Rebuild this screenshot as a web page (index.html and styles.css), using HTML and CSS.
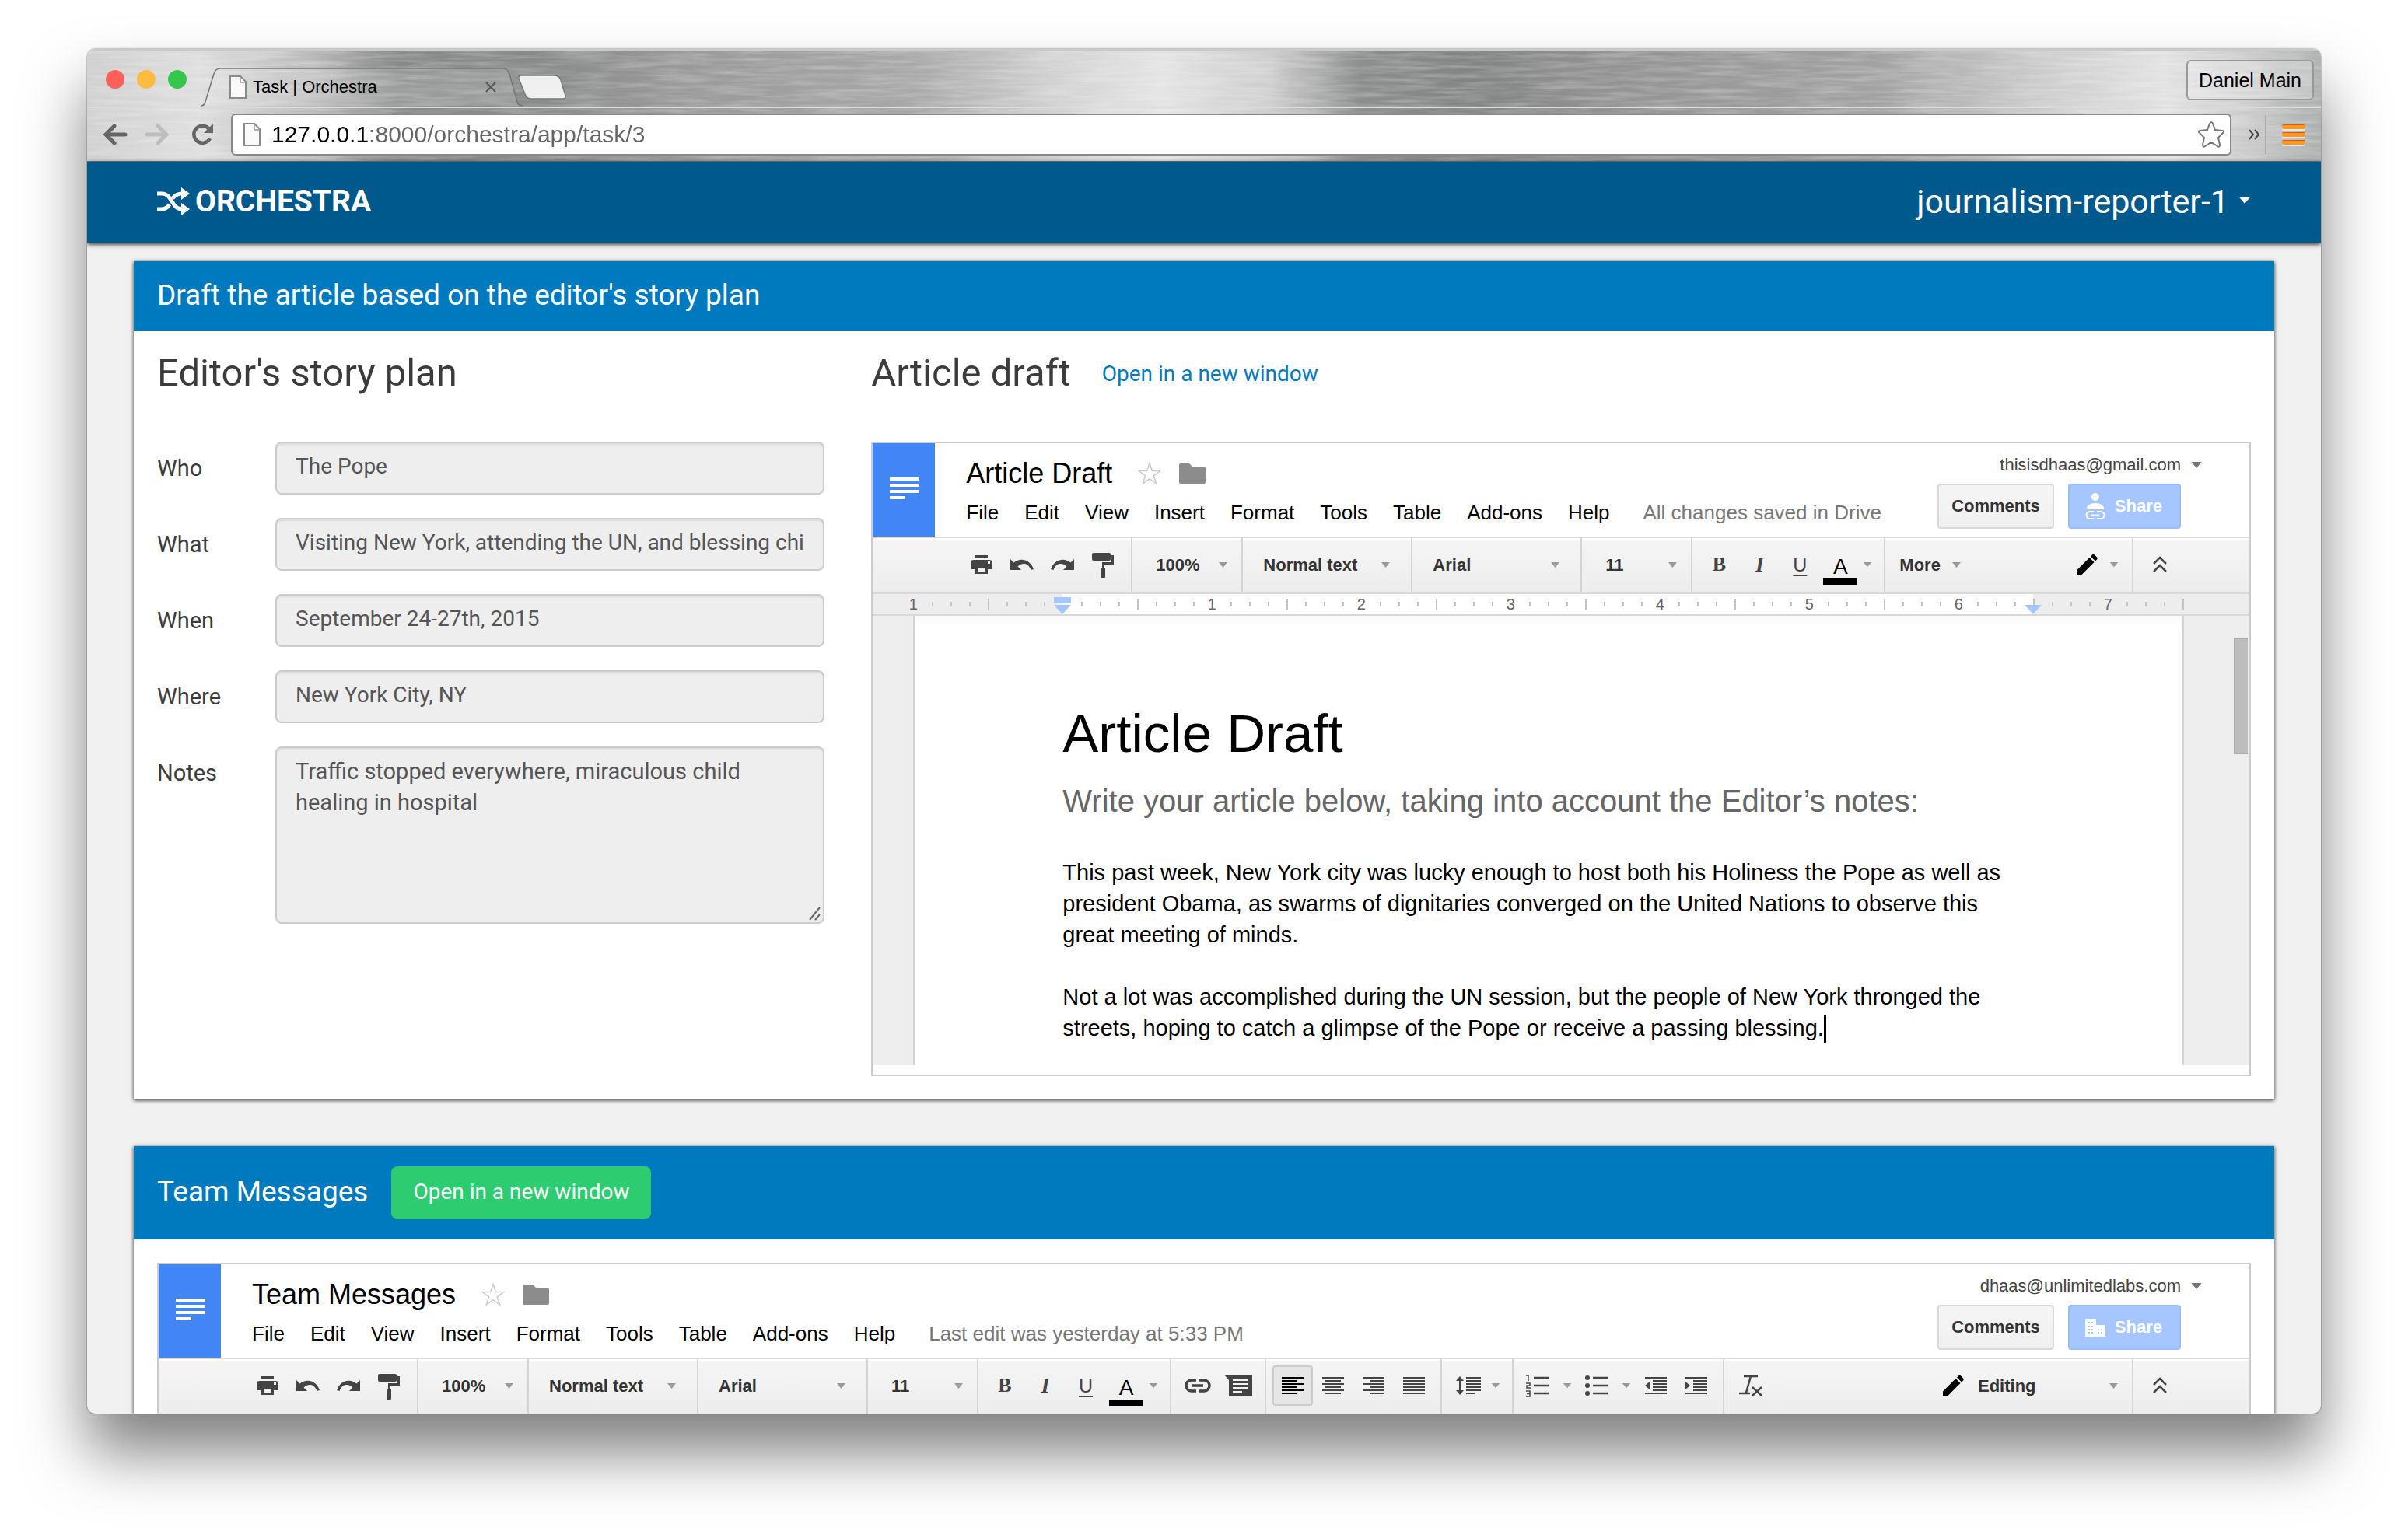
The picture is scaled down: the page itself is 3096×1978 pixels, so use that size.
FILE: index.html
```html
<!DOCTYPE html>
<html lang="en">
<head>
<meta charset="utf-8">
<title>Task | Orchestra</title>
<link rel="stylesheet" href="styles.css">
</head>
<body>
<svg class="sprite" aria-hidden="true">
  <symbol id="file" viewBox="0 0 22 30"><path d="M1 1h13l7 7v21H1z" fill="#fafafa" stroke="#8a8a8a" stroke-width="2"/><path d="M14 1v8h7" fill="none" stroke="#999" stroke-width="1.5"/></symbol>
  <symbol id="star" viewBox="0 0 30 30"><path d="M15 1.500l3.300 10h10.500l-8.500 6.300 3.300 10.200-8.600-6.300-8.600 6.300 3.300-10.200-8.500-6.300h10.500z" fill="#fff" stroke="#ccc" stroke-width="1.500"/></symbol>
  <symbol id="folder" viewBox="0 0 34 26"><path d="M2 0h11l4 4h15a2 2 0 0 1 2 2v18a2 2 0 0 1-2 2H2a2 2 0 0 1-2-2V2a2 2 0 0 1 2-2z" fill="#8c8c8c"/></symbol>
  <symbol id="print" viewBox="0 0 32 32"><path d="M8 4h16v4H8zM6 10h20a4 4 0 0 1 4 4v8h-6v-4H8v4H2v-8a4 4 0 0 1 4-4zM8 18h16v10H8zm3 2v6h10v-6zM24 12v3h3v-3z" fill="#444" fill-rule="evenodd"/></symbol>
  <symbol id="undo" viewBox="0 0 32 32"><path d="M1 9l4.500 4.500C13 7 26 8 31 22l-3.500 1C24 14 17 13 10.500 18.500L15 23H1z" fill="#444"/></symbol>
  <symbol id="redo" viewBox="0 0 32 32"><path d="M31 9l-4.500 4.500C19 7 6 8 1 22l3.500 1C8 14 15 13 21.500 18.500L17 23h14z" fill="#444"/></symbol>
  <symbol id="paint" viewBox="0 0 32 36"><path d="M4 3h20a2 2 0 0 1 2 2v1h4v12H18v4h1v12a2 2 0 0 1-6 0V22h2v-7h12V8h-1v3a2 2 0 0 1-2 2H4a2 2 0 0 1-2-2V5a2 2 0 0 1 2-2z" fill="#444"/></symbol>
  <symbol id="pencil" viewBox="0 0 32 32"><path d="M3 23.500L19.500 7l6 6L9 29.500H3zM21 5.500l2-2q1.500-1.500 3 0l3 3q1.500 1.500 0 3l-2 2z" fill="#000"/></symbol>
  <symbol id="collapse" viewBox="0 0 32 32"><path d="M8 15l8-8 8 8M8 25l8-8 8 8" fill="none" stroke="#444" stroke-width="2.500"/></symbol>
  <symbol id="caret" viewBox="0 0 12 8"><path d="M0 0h12L6 7z" fill="currentColor"/></symbol>
  <symbol id="link" viewBox="0 0 36 32"><path d="M16 9h-6a7 7 0 0 0 0 14h6M20 9h6a7 7 0 0 1 0 14h-6M11 16h14" fill="none" stroke="#444" stroke-width="3.500"/></symbol>
  <symbol id="comment" viewBox="0 0 36 32"><path d="M0 2h36v28H6V9zM11 8v2h19V8zm0 5v2h19v-2zm0 5v2h19v-2zm0 5v2h12v-2z" fill="#444" fill-rule="evenodd"/></symbol>
  <symbol id="al-left" viewBox="0 0 28 24"><path d="M0 2h28M0 6h19M0 10h28M0 14h19M0 18h28M0 22h19" stroke="currentColor" stroke-width="2"/></symbol>
  <symbol id="al-center" viewBox="0 0 28 24"><path d="M0 2h28M4 6h20M0 10h28M4 14h20M0 18h28M4 22h20" stroke="currentColor" stroke-width="2"/></symbol>
  <symbol id="al-right" viewBox="0 0 28 24"><path d="M0 2h28M9 6h19M0 10h28M9 14h19M0 18h28M9 22h19" stroke="currentColor" stroke-width="2"/></symbol>
  <symbol id="al-just" viewBox="0 0 28 24"><path d="M0 2h28M0 6h28M0 10h28M0 14h28M0 18h28M0 22h28" stroke="currentColor" stroke-width="2"/></symbol>
  <symbol id="spacing" viewBox="0 0 34 28"><path d="M6 4v20M14 4h19M14 8h19M14 12h19M14 16h19M14 20h19M14 24h11" stroke="#444" stroke-width="2"/><path d="M1 8l5-6 5 6zM1 20l5 6 5-6z" fill="#444"/></symbol>
  <symbol id="numbers" viewBox="0 0 30 30"><path d="M10 5h19M10 15h19M10 25h19" stroke="#444" stroke-width="2.500"/><path d="M0 2h3v7M0 12h5v3H1v3h5M0 22h5v7H0M1 25.500h4" fill="none" stroke="#444" stroke-width="1.500"/></symbol>
  <symbol id="bullets" viewBox="0 0 30 30"><path d="M10 5h19M10 15h19M10 25h19" stroke="#444" stroke-width="2.500"/><circle cx="3" cy="5" r="3" fill="#444"/><circle cx="3" cy="15" r="3" fill="#444"/><circle cx="3" cy="25" r="3" fill="#444"/></symbol>
  <symbol id="outdent" viewBox="0 0 28 24"><path d="M0 2h28M10 6h18M10 10h18M10 14h18M10 18h18M0 22h28" stroke="#444" stroke-width="2"/><path d="M6 7v10L0 12z" fill="#444"/></symbol>
  <symbol id="indent" viewBox="0 0 28 24"><path d="M0 2h28M10 6h18M10 10h18M10 14h18M10 18h18M0 22h28" stroke="#444" stroke-width="2"/><path d="M0 7v10l6-5z" fill="#444"/></symbol>
  <symbol id="clear" viewBox="0 0 30 30"><path d="M6 3h18M15 3L9 24M0 25h14M17 17l12 11M29 17L17 28" fill="none" stroke="#444" stroke-width="2.500"/></symbol>
  <symbol id="ticks" viewBox="0 0 180 26"><path d="M13 10v6M37 10v6M61 10v6M85 6v14M109 10v6M133 10v6M157 10v6" stroke="#c4c4c4" stroke-width="2"/></symbol>
  <symbol id="half-ticks" viewBox="0 0 88 26"><path d="M13 10v6M37 10v6M61 10v6M85 6v14" stroke="#c4c4c4" stroke-width="2"/></symbol>
</svg>

<div class="window">
  <header class="chrome">
    <svg class="metal" aria-hidden="true">
      <defs>
        <linearGradient id="steel">
          <stop offset="0" stop-color="#d0d0d0"/><stop offset=".05" stop-color="#dedede"/><stop offset=".1" stop-color="#bababa"/>
          <stop offset=".14" stop-color="#878988"/><stop offset=".2" stop-color="#898b8a"/><stop offset=".27" stop-color="#9a9a9a"/>
          <stop offset=".37" stop-color="#a8a8a8"/><stop offset=".43" stop-color="#d0d0d0"/><stop offset=".48" stop-color="#e4e4e4"/>
          <stop offset=".53" stop-color="#cdcdcd"/><stop offset=".57" stop-color="#8d8f8e"/><stop offset=".62" stop-color="#828483"/>
          <stop offset=".68" stop-color="#939393"/><stop offset=".8" stop-color="#a2a2a2"/><stop offset=".87" stop-color="#cacaca"/>
          <stop offset=".93" stop-color="#e2e2e2"/><stop offset=".97" stop-color="#c8c8c8"/><stop offset="1" stop-color="#abafad"/>
        </linearGradient>
        <filter id="brushed" x="0" y="0" width="100%" height="100%">
          <feTurbulence type="fractalNoise" baseFrequency="0.015 0.2" numOctaves="3" seed="4"/>
          <feColorMatrix values="0 0 0 0 1  0 0 0 0 1  0 0 0 0 1  .500 0 0 0 -.18"/>
        </filter>
      </defs>
      <rect width="100%" height="100%" fill="url(#steel)"/>
      <rect width="100%" height="100%" filter="url(#brushed)"/>
    </svg>
    <div class="tabstrip">
      <div class="lights">
        <button class="light close" aria-label="Close"></button>
        <button class="light minimise" aria-label="Minimise"></button>
        <button class="light zoom" aria-label="Zoom"></button>
      </div>
      <div class="tab">
        <svg class="tab-shape" viewBox="0 0 414 50" aria-hidden="true"><path d="M0 49q5 0 6-5L17 8q2-7 8-7h363q7 0 9 7l10 36q1 5 7 5" fill="#fff" fill-opacity=".15" stroke="#777" stroke-width="1.500"/></svg>
        <svg class="file"><use href="#file"/></svg>
        <span class="tab-title">Task | Orchestra</span>
        <button class="tab-close" aria-label="Close tab"><svg width="14" height="14" viewBox="0 0 14 14"><path d="M1 1l12 12M13 1L1 13" stroke="#555" stroke-width="2"/></svg></button>
      </div>
      <button class="newtab" aria-label="New tab"><svg width="64" height="32" viewBox="0 0 64 32"><path d="M5 1h42q7 0 9 6l6 20q1 4-3 4H18q-6 0-8-6L2 5q-1-4 3-4z" fill="#f0f0f0" stroke="#777" stroke-width="1.500"/></svg></button>
      <button class="profile">Daniel Main</button>
    </div>
    <div class="addressbar">
      <button class="nav-btn" aria-label="Back"><svg width="32" height="28" viewBox="0 0 32 28"><path d="M15 3L4 14l11 11M5 14h24" fill="none" stroke="#666" stroke-width="5" stroke-linecap="round"/></svg></button>
      <button class="nav-btn" aria-label="Forward"><svg width="32" height="28" viewBox="0 0 32 28"><path d="M17 3l11 11-11 11M27 14H3" fill="none" stroke="#bdbdbd" stroke-width="5" stroke-linecap="round"/></svg></button>
      <button class="nav-btn reload" aria-label="Reload"><svg width="30" height="28" viewBox="0 0 30 28"><path d="M24 19a11 11 0 1 1-1-12" fill="none" stroke="#666" stroke-width="4.500"/><path d="M28 0v12H16z" fill="#666"/></svg></button>
      <div class="omnibox">
        <svg class="file"><use href="#file"/></svg>
        <input class="url" type="text" aria-label="Address" value="127.0.0.1:8000/orchestra/app/task/3">
        <button class="bookmark" aria-label="Bookmark"><svg width="36" height="36" viewBox="0 0 36 36"><path d="M16 4q2-4 4 0l3 8 9 1q4 0 1 3l-6 6 2 9q0 4-3 2l-8-5-8 5q-3 2-3-2l2-9-6-6q-3-3 1-3l9-1z" fill="#fff" stroke="#777" stroke-width="2"/></svg></button>
      </div>
      <button class="overflow" aria-label="More extensions"><svg width="14" height="14" viewBox="0 0 14 14"><path d="M1 1l5 6-5 6M8 1l5 6-5 6" fill="none" stroke="#444" stroke-width="2"/></svg></button>
      <button class="menu" aria-label="Menu"><span></span><span></span><span></span></button>
    </div>
  </header>

  <nav class="navbar">
    <a class="brand" href="#"><svg width="42" height="36" viewBox="0 0 42 36"><path d="M0 8h6c14 0 12 20 26 20h2M0 28h6c5 0 8-3 10-6M20 14c3-4 6-6 12-6h2" fill="none" stroke="#fff" stroke-width="5"/><path d="M31 0l11 8-11 8zM31 20l11 8-11 8z" fill="#fff"/></svg>ORCHESTRA</a>
    <a class="user" href="#">journalism-reporter-1<svg width="16" height="9"><use href="#caret"/></svg></a>
  </nav>

  <main class="content">
    <section class="card">
      <h2 class="card-head">Draft the article based on the editor's story plan</h2>
      <div class="card-body columns">
        <form class="plan">
          <h3>Editor's story plan</h3>
          <div class="field"><label for="who">Who</label><input id="who" type="text" readonly value="The Pope"></div>
          <div class="field"><label for="what">What</label><input id="what" type="text" readonly value="Visiting New York, attending the UN, and blessing children"></div>
          <div class="field"><label for="when">When</label><input id="when" type="text" readonly value="September 24-27th, 2015"></div>
          <div class="field"><label for="where">Where</label><input id="where" type="text" readonly value="New York City, NY"></div>
          <div class="field"><label for="notes">Notes</label><div class="area"><textarea id="notes" readonly>Traffic stopped everywhere, miraculous child healing in hospital</textarea><svg class="grip" width="16" height="18" viewBox="0 0 16 18"><path d="M1 17L14 1M8 17l6-7" stroke="#666" stroke-width="2"/></svg></div></div>
        </form>
        <div class="draft">
          <div class="draft-head"><h3>Article draft</h3><a href="#">Open in a new window</a></div>
          <article class="doc">
            <header class="doc-head">
              <div class="doc-logo"><span></span><span></span><span></span><span class="short"></span></div>
              <div class="doc-main">
                <div class="doc-title"><h4>Article Draft</h4><svg class="star"><use href="#star"/></svg><svg class="folder"><use href="#folder"/></svg></div>
                <div class="doc-menu"><button>File</button><button>Edit</button><button>View</button><button>Insert</button><button>Format</button><button>Tools</button><button>Table</button><button>Add-ons</button><button>Help</button><span class="status">All changes saved in Drive</span></div>
              </div>
              <div class="doc-side">
                <a class="account" href="#">thisisdhaas@gmail.com<svg width="16" height="9"><use href="#caret"/></svg></a>
                <div class="actions"><button class="btn">Comments</button><button class="btn share"><svg width="28" height="36" viewBox="0 0 28 36"><circle cx="14" cy="6" r="5" fill="#fff"/><path d="M3 22q0-8 11-8t11 8z" fill="#fff"/><path d="M12 25H7a4 4 0 0 0 0 9h5M16 25h5a4 4 0 0 1 0 9h-5M9 29.500h10" fill="#a6c6ff" stroke="#fff" stroke-width="2"/></svg>Share</button></div>
              </div>
            </header>
            <div class="toolbar">
              <div class="group first"><button class="tool" aria-label="Print"><svg class="i32"><use href="#print"/></svg></button><button class="tool" aria-label="Undo"><svg class="i32"><use href="#undo"/></svg></button><button class="tool" aria-label="Redo"><svg class="i32"><use href="#redo"/></svg></button><button class="tool" aria-label="Paint format"><svg class="i36"><use href="#paint"/></svg></button></div>
              <div class="group pick"><select class="narrow" aria-label="Zoom"><option>100%</option></select></div>
              <div class="group pick"><select class="wide" aria-label="Style"><option>Normal text</option></select></div>
              <div class="group pick"><select class="wide" aria-label="Font"><option>Arial</option></select></div>
              <div class="group pick"><select class="narrow" aria-label="Font size"><option>11</option></select></div>
              <div class="group drops"><button class="tool bold">B</button><button class="tool italic">I</button><button class="tool underline">U</button><button class="tool colour"><span>A</span></button><svg class="drop"><use href="#caret"/></svg></div>
              <div class="group pick grow"><select class="more" aria-label="More tools"><option>More</option></select></div>
              <div class="plain"><button class="tool" aria-label="Mode"><svg class="i32"><use href="#pencil"/></svg></button><svg class="drop"><use href="#caret"/></svg></div>
              <div class="group last"><button class="tool" aria-label="Hide menus"><svg class="i32"><use href="#collapse"/></svg></button></div>
            </div>
            <ol class="ruler">
              <li class="off"><span>1</span><svg class="ticks"><use href="#ticks"/></svg></li>
              <li><span class="marker"><svg width="24" height="26" viewBox="0 0 24 26"><path d="M1 4h22v8H1zM1 14h22L12 26z" fill="#a5c6ff"/></svg></span><svg class="ticks"><use href="#ticks"/></svg></li>
              <li><span>1</span><svg class="ticks"><use href="#ticks"/></svg></li>
              <li><span>2</span><svg class="ticks"><use href="#ticks"/></svg></li>
              <li><span>3</span><svg class="ticks"><use href="#ticks"/></svg></li>
              <li><span>4</span><svg class="ticks"><use href="#ticks"/></svg></li>
              <li><span>5</span><svg class="ticks"><use href="#ticks"/></svg></li>
              <li class="edge"><span>6</span><svg class="ticks"><use href="#ticks"/></svg><svg class="stop" width="24" height="26" viewBox="0 0 24 26"><path d="M1 14h22L12 26z" fill="#a5c6ff"/></svg></li>
              <li class="off half"><span>7</span><svg class="ticks"><use href="#half-ticks"/></svg></li>
            </ol>
            <div class="desk">
              <div class="page">
                <h1>Article Draft</h1>
                <p class="sub">Write your article below, taking into account the Editor’s notes:</p>
                <p>This past week, New York city was lucky enough to host both his Holiness the Pope as well as president Obama, as swarms of dignitaries converged on the United Nations to observe this great meeting of minds.</p>
                <p>Not a lot was accomplished during the UN session, but the people of New York thronged the streets, hoping to catch a glimpse of the Pope or receive a passing blessing.<span class="cursor"></span></p>
              </div>
              <div class="scroll"></div>
            </div>
          </article>
        </div>
      </div>
    </section>

    <section class="card">
      <div class="card-head tall"><h2>Team Messages</h2><button class="open">Open in a new window</button></div>
      <div class="card-body messages">
        <article class="doc cut">
          <header class="doc-head">
            <div class="doc-logo"><span></span><span></span><span></span><span class="short"></span></div>
            <div class="doc-main">
              <div class="doc-title"><h4>Team Messages</h4><svg class="star"><use href="#star"/></svg><svg class="folder"><use href="#folder"/></svg></div>
              <div class="doc-menu"><button>File</button><button>Edit</button><button>View</button><button>Insert</button><button>Format</button><button>Tools</button><button>Table</button><button>Add-ons</button><button>Help</button><span class="status">Last edit was yesterday at 5:33 PM</span></div>
            </div>
            <div class="doc-side">
              <a class="account" href="#">dhaas@unlimitedlabs.com<svg width="16" height="9"><use href="#caret"/></svg></a>
              <div class="actions"><button class="btn">Comments</button><button class="btn share"><svg width="28" height="24" viewBox="0 0 28 24"><path d="M1 1h14v8h12v15H1zM5 5v2h2V5zm4 0v2h2V5zM5 10v2h2v-2zm4 0v2h2v-2zM5 14v2h2v-2zm4 0v2h2v-2zM5 18v2h2v-2zm4 0v2h2v-2zM17 14v2h2v-2zm4 0v2h2v-2zM17 18v2h2v-2zm4 0v2h2v-2z" fill="#fff" fill-rule="evenodd"/></svg>Share</button></div>
            </div>
          </header>
          <div class="toolbar">
            <div class="group first"><button class="tool" aria-label="Print"><svg class="i32"><use href="#print"/></svg></button><button class="tool" aria-label="Undo"><svg class="i32"><use href="#undo"/></svg></button><button class="tool" aria-label="Redo"><svg class="i32"><use href="#redo"/></svg></button><button class="tool" aria-label="Paint format"><svg class="i36"><use href="#paint"/></svg></button></div>
            <div class="group pick"><select class="narrow" aria-label="Zoom"><option>100%</option></select></div>
            <div class="group pick"><select class="wide" aria-label="Style"><option>Normal text</option></select></div>
            <div class="group pick"><select class="wide" aria-label="Font"><option>Arial</option></select></div>
            <div class="group pick"><select class="narrow" aria-label="Font size"><option>11</option></select></div>
            <div class="group drops"><button class="tool bold">B</button><button class="tool italic">I</button><button class="tool underline">U</button><button class="tool colour"><span>A</span></button><svg class="drop"><use href="#caret"/></svg></div>
            <div class="group"><button class="tool" aria-label="Link"><svg class="w36"><use href="#link"/></svg></button><button class="tool" aria-label="Comment"><svg class="w36"><use href="#comment"/></svg></button></div>
            <div class="group"><button class="tool active" aria-label="Align left"><svg class="i28"><use href="#al-left"/></svg></button><button class="tool" aria-label="Align centre"><svg class="i28"><use href="#al-center"/></svg></button><button class="tool" aria-label="Align right"><svg class="i28"><use href="#al-right"/></svg></button><button class="tool" aria-label="Justify"><svg class="i28"><use href="#al-just"/></svg></button></div>
            <div class="group drops"><button class="tool" aria-label="Line spacing"><svg class="i34"><use href="#spacing"/></svg></button><svg class="drop"><use href="#caret"/></svg></div>
            <div class="group lists"><button class="tool" aria-label="Numbered list"><svg class="i30"><use href="#numbers"/></svg></button><svg class="drop"><use href="#caret"/></svg><button class="tool" aria-label="Bulleted list"><svg class="i30"><use href="#bullets"/></svg></button><svg class="drop"><use href="#caret"/></svg><button class="tool" aria-label="Decrease indent"><svg class="i28"><use href="#outdent"/></svg></button><button class="tool" aria-label="Increase indent"><svg class="i28"><use href="#indent"/></svg></button></div>
            <div class="group grow"><button class="tool" aria-label="Clear formatting"><svg class="i30"><use href="#clear"/></svg></button></div>
            <div class="mode"><button class="tool" aria-label="Mode"><svg class="i32"><use href="#pencil"/></svg></button><select aria-label="Editing mode"><option>Editing</option></select></div>
            <div class="group last"><button class="tool" aria-label="Hide menus"><svg class="i32"><use href="#collapse"/></svg></button></div>
          </div>
        </article>
      </div>
    </section>
  </main>
</div>
</body>
</html>
```

FILE: styles.css
```css
* { box-sizing: border-box; }

body {
  margin: 0;
  padding: 63px 112px 160px;
  background: #fff;
  font-family: Roboto, sans-serif;
  color: #3c3c3c;
}

h1, h2, h3, h4, p, ol { margin: 0; padding: 0; font-weight: 400; }
button, input, select, textarea { font: inherit; color: inherit; margin: 0; }
button { padding: 0; border: 0; background: none; }
a { text-decoration: none; color: #007abf; }
svg { display: block; flex: none; }
.sprite { position: absolute; width: 0; height: 0; }

.window {
  display: flex;
  flex-direction: column;
  overflow: hidden;
  border-radius: 10px;
  background: #f1f1f1;
  box-shadow: 0 50px 80px rgba(0, 0, 0, .5), 0 0 2px rgba(0, 0, 0, .7);
}

/* Browser chrome */
.chrome {
  position: relative;
  border-top: 2px solid #c9c9c9;
  border-bottom: 1px solid #777;
  font-family: "Liberation Sans", sans-serif;
}
.metal { position: absolute; inset: 0; width: 100%; height: 100%; }
.tabstrip {
  position: relative;
  display: flex;
  align-items: flex-end;
  height: 73px;
  padding: 0 9px 0 24px;
  border-bottom: 1px solid #888;
}
.lights { display: flex; gap: 16px; padding-bottom: 23px; }
.light { width: 24px; height: 24px; border-radius: 50%; }
.close { background: #fc605b; }
.minimise { background: #fdbc40; }
.zoom { background: #34c749; }
.tab {
  position: relative;
  display: flex;
  align-items: center;
  width: 414px;
  height: 50px;
  margin-left: 18px;
  padding: 0 34px 0 37px;
}
.tab-shape { position: absolute; inset: 0; width: 100%; height: 100%; }
.file { position: relative; width: 22px; height: 30px; }
.tab-title { position: relative; flex: 1; padding-left: 8px; font-size: 22px; color: #000; }
.tab-close { position: relative; }
.newtab { margin: 0 auto 9px -7px; }
.profile {
  height: 52px;
  margin-bottom: 8px;
  padding: 0 14px;
  border: 2px solid #999;
  border-radius: 6px;
  background: rgba(255, 255, 255, .25);
  font-size: 25px;
  color: #000;
}
.addressbar {
  position: relative;
  display: flex;
  align-items: center;
  height: 69px;
  padding: 0 20px;
  border-top: 1px solid #ddd;
}
.nav-btn { width: 54px; }
.nav-btn svg { width: 32px; }
.reload { padding-left: 5px; }
.omnibox {
  flex: 1;
  display: flex;
  align-items: center;
  height: 54px;
  margin: 0 22px 0 3px;
  padding: 0 6px 0 14px;
  border: 2px solid #888;
  border-radius: 6px;
  background: #fff;
}
.url {
  flex: 1;
  height: 44px;
  padding: 0 0 0 14px;
  border: 0;
  font-size: 30px;
  color: transparent;
  background: linear-gradient(90deg, #000 139px, #666 139px);
  background-clip: text;
  -webkit-background-clip: text;
}
.menu {
  display: flex;
  flex-direction: column;
  gap: 4px;
  margin-left: 7px;
  padding: 12px 0 12px 20px;
  border-left: 2px solid #aaa;
}
.menu span { width: 30px; height: 6px; border-radius: 2px; background: #fb9a20; border-top: 1px solid #e8500e; box-shadow: 0 2px 0 #e6e6e6; }

/* Application bar */
.navbar {
  position: relative;
  display: flex;
  align-items: center;
  justify-content: space-between;
  height: 104px;
  padding: 0 90px 3px;
  background: #00598d;
  box-shadow: 0 2px 6px rgba(0, 0, 0, .9);
}
.navbar a { display: flex; align-items: center; color: #fff; }
.brand { gap: 7px; font-size: 39px; font-weight: 700; }
.user { gap: 12px; font-size: 43px; }

.content { display: flex; flex-direction: column; gap: 60px; padding: 24px 60px 0; }
.card { background: #fff; box-shadow: 0 1px 5px rgba(0, 0, 0, .8); }
.card-head {
  display: flex;
  align-items: center;
  height: 90px;
  padding: 0 30px 3px;
  background: #007abf;
  color: #fff;
  font-size: 37px;
}
.tall { height: 120px; gap: 30px; padding-bottom: 0; }
.tall h2 { padding-bottom: 3px; font-size: 37px; }
.open { height: 68px; padding: 0 28px 3px; border-radius: 8px; background: #2ecc71; font-size: 28px; }
.card-body { padding: 28px 30px 30px; }
.columns { display: grid; grid-template-columns: calc((100% + 60px) / 3 - 59px) 1fr; gap: 60px; }
.messages { padding: 30px 30px 0; }

h3 { font-size: 49px; line-height: 52px; }
.plan { display: flex; flex-direction: column; gap: 30px; }
.plan h3 { margin-bottom: 32px; }
.field { display: flex; font-size: 29px; line-height: 40px; }
.field label { width: 152px; padding-top: 14px; }
.field input, .field textarea {
  flex: 1;
  min-width: 0;
  width: 100%;
  height: 68px;
  padding: 0 24px 6px;
  border: 2px solid #ccc;
  border-radius: 8px;
  background: #eee;
  box-shadow: inset 0 2px 2px rgba(0, 0, 0, .08);
  color: #555;
  outline: 0;
}
.field input { font-size: 28px; }
.area { position: relative; flex: 1; }
.field textarea { display: block; height: 228px; padding: 10px 24px; resize: none; }
.grip { position: absolute; right: 4px; bottom: 4px; }

.draft { min-width: 0; }
.draft-head { display: flex; align-items: center; gap: 40px; margin-bottom: 62px; }
.draft-head a { font-size: 28px; }

/* Embedded document */
.doc {
  padding-bottom: 12px;
  border: 2px solid #ccc;
  font-family: "Liberation Sans", sans-serif;
  color: #000;
}
.cut { padding-bottom: 0; border-bottom: 0; }
.doc-head { display: flex; height: 120px; }
.doc-logo {
  display: flex;
  flex-direction: column;
  gap: 4px;
  width: 80px;
  padding: 44px 20px 0 22px;
  background: #4285f4;
}
.doc-logo span { height: 4px; background: #fff; }
.doc-logo .short { width: 20px; }
.doc-main { flex: 1; padding: 19px 0 0 40px; }
.doc-title { display: flex; align-items: center; height: 40px; margin-bottom: 14px; }
.doc-title h4 { font-size: 36px; line-height: 40px; }
.star { width: 30px; height: 30px; margin: 0 23px 0 33px; }
.folder { width: 34px; height: 26px; }
.doc-menu { display: flex; gap: 33px; font-size: 26px; line-height: 32px; }
.status { margin-left: 10px; color: #777; }
.doc-side { display: flex; flex-direction: column; align-items: flex-end; gap: 10px; padding: 14px 60px 0 0; }
.account { display: flex; align-items: center; gap: 12px; font-size: 22px; line-height: 28px; color: #444; }
.account svg { color: #777; }
.actions { display: flex; gap: 18px; margin-right: 28px; }
.btn {
  display: flex;
  align-items: center;
  height: 58px;
  padding: 0 16px;
  border: 2px solid #d9d9d9;
  border-radius: 4px;
  background: linear-gradient(#f5f5f5, #f0f0f0);
  font-size: 22px;
  font-weight: 700;
  color: #333;
}
.share { gap: 11px; padding: 0 22px 0 19px; border-color: #98bdf9; background: #a6c6ff; color: #fff; }

.toolbar {
  display: flex;
  height: 72px;
  border-top: 2px solid #d9d9d9;
  background: linear-gradient(#fff 2px, #f5f5f5 2px, #ededed);
  font-size: 22px;
  font-weight: 700;
  color: #333;
}
.group, .plain, .mode { display: flex; align-items: center; padding-bottom: 2px; }
.group { padding: 0 8px 2px; border-left: 2px solid #d4d4d4; }
.first { padding: 0 10px 2px 114px; border-left: 0; }
.pick { padding: 0 0 2px; }
.drops { padding-right: 12px; }
.plain { padding-right: 14px; }
.lists { padding: 0 8px 2px 5px; }
.last { width: 151px; }
.grow { flex: 1; }
.tool { display: flex; align-items: center; justify-content: center; width: 52px; height: 52px; color: #444; }
.active { border: 2px solid #ccc; border-radius: 4px; background: #e6e6e6; color: #000; }
.drop { width: 18px; height: 7px; color: #999; }
.lists .drop { width: 24px; }
.bold { font-size: 26px; font-weight: 700; font-family: "Liberation Serif", serif; }
.italic { font-size: 28px; font-style: italic; font-weight: 700; font-family: "Liberation Serif", serif; }
.underline { font-size: 25px; font-weight: 400; text-decoration: underline; text-underline-offset: 4px; }
.colour { font-size: 28px; font-weight: 400; color: #000; }
.colour span { width: 44px; margin-top: 14px; border-bottom: 8px solid #000; line-height: 30px; }
.i28 { width: 28px; height: 24px; }
.i30 { width: 30px; height: 30px; }
.i32 { width: 32px; height: 32px; }
.i34 { width: 34px; height: 28px; }
.i36 { width: 32px; height: 36px; }
.w36 { width: 36px; height: 32px; }

.toolbar select {
  height: 68px;
  padding: 0;
  border: 0;
  appearance: none;
  background: url("data:image/svg+xml,%3Csvg xmlns='http://www.w3.org/2000/svg' width='11' height='7'%3E%3Cpath d='M0 0h11L5.500 7z' fill='%23999'/%3E%3C/svg%3E") no-repeat right 18px center;
}
.toolbar .narrow { width: 140px; padding-left: 30px; }
.toolbar .wide { width: 216px; padding-left: 26px; background-position: right 27px center; }
.toolbar .more { width: 115px; padding-left: 18px; }
.toolbar .mode select { width: 204px; padding-left: 6px; }

.ruler {
  display: flex;
  height: 30px;
  padding-left: 52px;
  border-top: 2px solid #d9d9d9;
  border-bottom: 2px solid #d9d9d9;
  background: #ededed;
  list-style: none;
  font-size: 20px;
  line-height: 26px;
  color: #666;
}
.ruler li { position: relative; display: flex; flex: none; width: 192px; background: #fff; }
.ruler .off { background: none; }
.ruler .edge { background: linear-gradient(90deg, #fff 50%, #ededed 50%); }
.ruler .half { width: 100px; }
.ruler span { width: 24px; margin-left: -12px; text-align: center; }
.ruler .marker { position: relative; z-index: 1; }
.ticks { width: 180px; height: 26px; }
.half .ticks { width: 88px; }
.stop { position: absolute; left: 84px; top: 0; }

.desk { position: relative; padding: 0 84px 0 52px; background: #eee; }
.page {
  padding: 112px 190px 28px;
  border: solid #d4d4d4;
  border-width: 0 2px;
  background: linear-gradient(#f8f8f8, #fff 14px);
  font-size: 29px;
  line-height: 40px;
}
.page h1 { font-size: 69px; line-height: 80px; margin-bottom: 22px; }
.page .sub { font-size: 40px; line-height: 48px; margin-bottom: 48px; color: #666; }
.page p + p + p { margin-top: 40px; }
.cursor { display: inline-block; width: 3px; height: 36px; margin: -8px 0; background: #000; vertical-align: middle; }
.scroll { position: absolute; top: 28px; right: 2px; width: 18px; height: 150px; border: solid #aaa; border-width: 2px 0 2px 1px; background: #bdbdbd; }
```
